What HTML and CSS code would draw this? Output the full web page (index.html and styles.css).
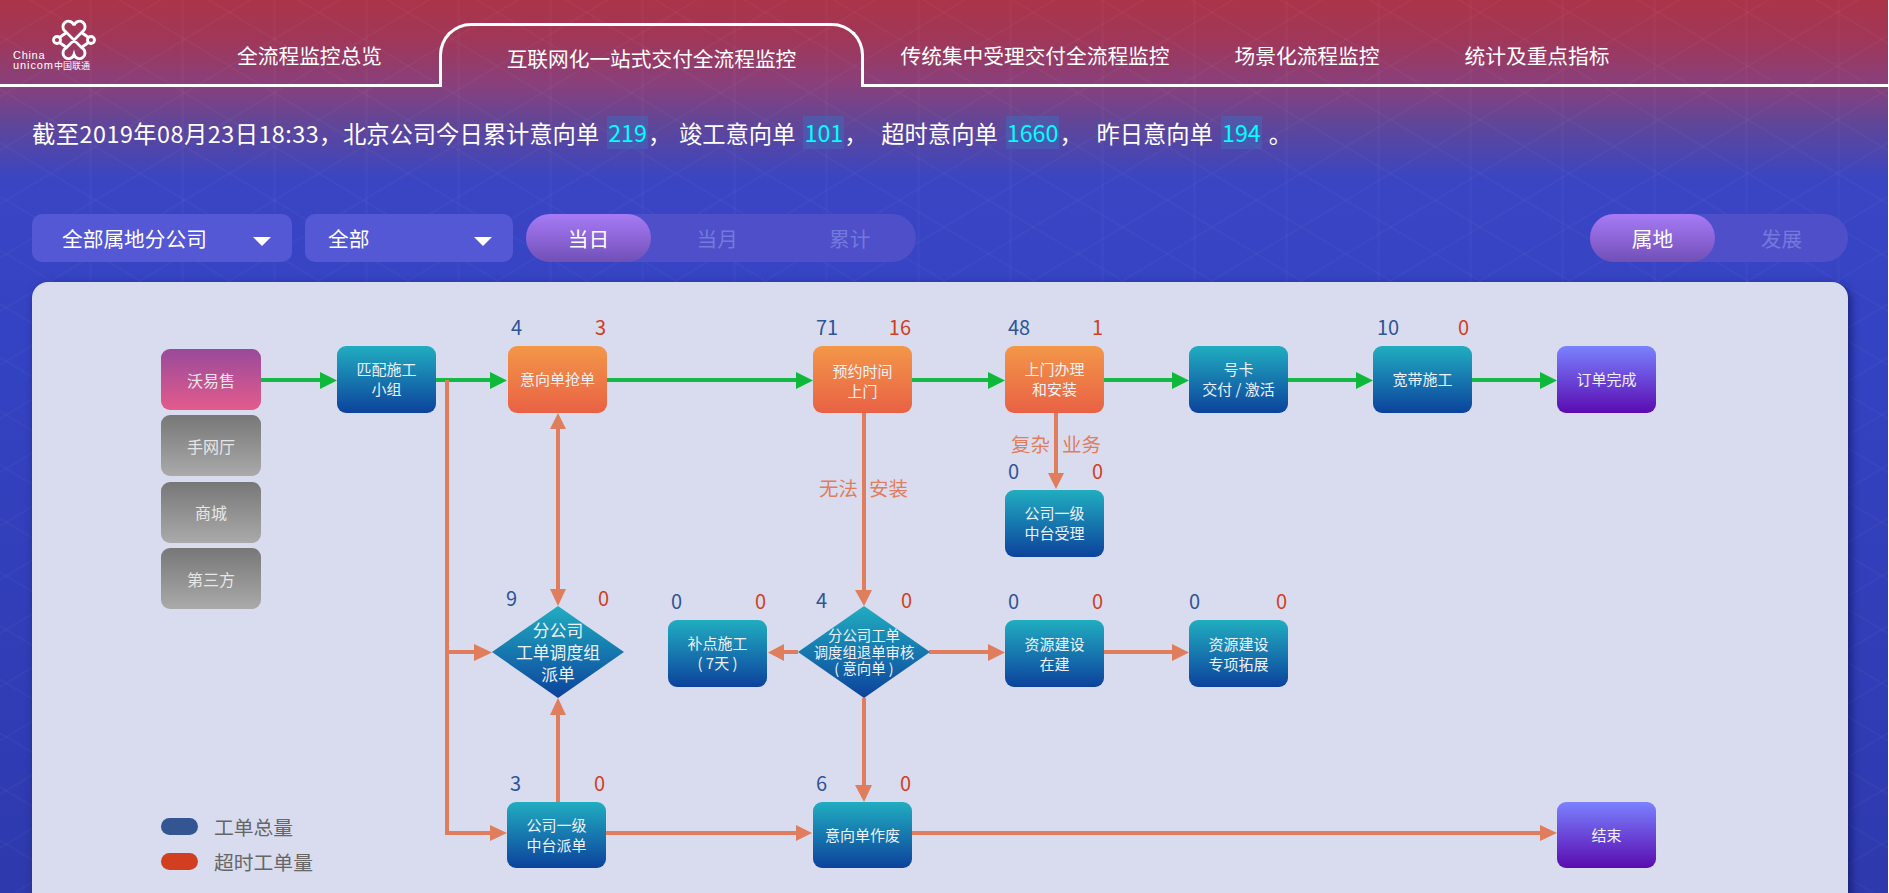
FILE: index.html
```html
<!DOCTYPE html>
<html lang="zh-CN">
<head>
  <meta charset="UTF-8">
  <meta name="viewport" content="width=device-width, initial-scale=1.0">
  <title>全流程监控</title>
  <link rel="stylesheet" href="styles.css">
</head>
<body>
<div class="page">

  <!-- Top navigation -->
  <header class="header">
    <div class="logo">
      <svg class="logo-mark" viewBox="0 0 90 50" width="90" height="50">
        <g fill="none" stroke="#fff" stroke-width="2.8" transform="translate(35 -2)">
          <path d="M34 30 L17.500 13.500 A5.600 5.600 0 1 1 26 7.500 A5.600 5.600 0 1 1 34.500 13.500 L18 30 A5.600 5.600 0 1 0 26 36.500 A5.600 5.600 0 1 0 34 30"/>
          <circle cx="9" cy="22" r="3.500"/>
          <circle cx="43" cy="22" r="3.500"/>
          <path d="M11.500 19.500 L18.500 14.500 M11.500 24.500 L18.500 29.500 M40.500 19.500 L33.500 14.500 M40.500 24.500 L33.500 29.500"/>
        </g>
        <text class="logo-china" x="0" y="39">China</text>
        <text class="logo-unicom" x="0" y="49">unicom<tspan class="logo-cn">中国联通</tspan></text>
      </svg>
    </div>
    <div class="tab tab-overview">全流程监控总览</div>
    <div class="tab tab-active">互联网化一站式交付全流程监控</div>
    <div class="tab tab-classic">传统集中受理交付全流程监控</div>
    <div class="tab tab-scene">场景化流程监控</div>
    <div class="tab tab-stats">统计及重点指标</div>
    <div class="tab tab-rest"></div>
  </header>

  <!-- Summary line -->
  <p class="summary">
    <span class="s-time">截至2019年08月23日18:33，</span>
    <span>北京公司今日累计意向单</span>
    <b class="hl">219</b>
    <span class="sep">，</span>
    <span class="s-done">竣工意向单</span>
    <b class="hl">101</b>
    <span class="sep">，</span>
    <span class="s-late">超时意向单</span>
    <b class="hl">1660</b>
    <span class="sep">，</span>
    <span class="s-yest">昨日意向单</span>
    <b class="hl">194</b>
    <span class="sep sep-end">。</span>
  </p>

  <!-- Filters -->
  <div class="filters">
    <div class="select select-org">全部属地分公司<i class="caret"></i></div>
    <div class="select select-all">全部<i class="caret"></i></div>
    <div class="toggle toggle-time">
      <span class="toggle-item on">当日</span>
      <span class="toggle-item">当月</span>
      <span class="toggle-item">累计</span>
    </div>
    <div class="toggle toggle-dim">
      <span class="toggle-item on">属地</span>
      <span class="toggle-item">发展</span>
    </div>
  </div>

  <!-- Flow diagram -->
  <main class="panel">
    <svg class="wires" viewBox="32 282 1816 620" width="1816" height="620">
      <g class="wire-green">
        <path d="M261 380H322M436 380H492M607 380H798M912 380H990M1104 380H1174M1288 380H1358M1472 380H1542"/>
      </g>
      <g class="tip-green">
        <polygon points="320,372 337,380.500 320,389"/>
        <polygon points="490,372 507,380.500 490,389"/>
        <polygon points="796,372 813,380.500 796,389"/>
        <polygon points="988,372 1005,380.500 988,389"/>
        <polygon points="1172,372 1189,380.500 1172,389"/>
        <polygon points="1356,372 1373,380.500 1356,389"/>
        <polygon points="1540,372 1557,380.500 1540,389"/>
      </g>
      <g class="wire-orange">
        <path d="M447 380V833H492M447 652H476M558 429V591M558 802V713M864 413V592M1056 413V475M798 652H782M929 652H990M1104 652H1174M864 698V787M606 833H798M912 833H1542"/>
      </g>
      <g class="tip-orange">
        <polygon points="490,825 507,833 490,841"/>
        <polygon points="474,644 492,652.500 474,661"/>
        <polygon points="550,429 558,413 566,429"/>
        <polygon points="550,589 558,606 566,589"/>
        <polygon points="550,715 558,698 566,715"/>
        <polygon points="855,590 864,606 872,590"/>
        <polygon points="1048,473 1056,489 1064,473"/>
        <polygon points="784,644 768,652.500 784,661"/>
        <polygon points="988,644 1005,652.500 988,661"/>
        <polygon points="1172,644 1189,652.500 1172,661"/>
        <polygon points="855,785 864,802 872,785"/>
        <polygon points="796,825 812,833 796,841"/>
        <polygon points="1540,825 1557,833 1540,841"/>
      </g>
    </svg>

    <div class="channels">
      <div class="channel pink">沃易售</div>
      <div class="channel gray">手网厅</div>
      <div class="channel gray">商城</div>
      <div class="channel gray">第三方</div>
    </div>

    <div class="node blue at-match">匹配施工<br>小组</div>

    <div class="node orange at-grab">
      <div class="counts"><span>4</span><em>3</em></div>意向单抢单
    </div>
    <div class="node orange at-book">
      <div class="counts"><span>71</span><em>16</em></div>预约时间<br>上门
    </div>
    <div class="node orange at-visit">
      <div class="counts"><span>48</span><em>1</em></div>上门办理<br>和安装
    </div>
    <div class="node blue at-card">号卡<br>交付 / 激活</div>
    <div class="node blue at-band">
      <div class="counts counts-band"><span>10</span><em>0</em></div>宽带施工
    </div>
    <div class="node purple at-finish">订单完成</div>

    <div class="node blue at-mid">
      <div class="counts"><span>0</span><em>0</em></div>公司一级<br>中台受理
    </div>

    <div class="diamond at-dispatch">
      <div class="diamond-shape">分公司<br>工单调度组<br>派单</div>
      <div class="counts counts-dispatch"><span>9</span><em>0</em></div>
    </div>
    <div class="diamond at-review">
      <div class="diamond-shape diamond-small">分公司工单<br>调度组退单审核<br>( 意向单 )</div>
      <div class="counts counts-review"><span>4</span><em>0</em></div>
    </div>

    <div class="node blue at-patch">
      <div class="counts"><span>0</span><em>0</em></div>补点施工<br>( 7天 )
    </div>
    <div class="node blue at-build">
      <div class="counts"><span>0</span><em>0</em></div>资源建设<br>在建
    </div>
    <div class="node blue at-expand">
      <div class="counts counts-flush"><span>0</span><em>0</em></div>资源建设<br>专项拓展
    </div>

    <div class="node blue at-center">
      <div class="counts"><span>3</span><em>0</em></div>公司一级<br>中台派单
    </div>
    <div class="node blue at-void">
      <div class="counts"><span>6</span><em>0</em></div>意向单作废
    </div>
    <div class="node purple at-end">结束</div>

    <div class="wire-label at-complex"><span>复杂</span><span>业务</span></div>
    <div class="wire-label at-noinstall"><span>无法</span><span>安装</span></div>

    <div class="legend">
      <div class="legend-row"><i class="pill pill-total"></i>工单总量</div>
      <div class="legend-row"><i class="pill pill-late"></i>超时工单量</div>
    </div>
  </main>
</div>
</body>
</html>
```

FILE: styles.css
```css
* {
  box-sizing: border-box;
}
html, body {
  margin: 0;
  height: 100%;
  overflow: hidden;
  background-color: #fff;
}
body {
  font-family: "Noto Sans CJK SC", "Noto Sans", sans-serif;
  color: #fff;
}
.page {
  height: 893px;
  margin-right: 1px;
  overflow: hidden;
  background-image:
    repeating-linear-gradient(31deg, transparent 0 44px, rgba(255,255,255,.022) 44px 46px),
    repeating-linear-gradient(-31deg, transparent 0 44px, rgba(255,255,255,.022) 44px 46px),
    repeating-linear-gradient(90deg, transparent 0 89px, rgba(255,255,255,.018) 89px 92px),
    linear-gradient(180deg, #ab3449 0, #a03759 40px, #88407c 85px, #5f4699 125px, #3a45c3 180px, #3443c3 340px, #2e39ad 893px);
}

/* header */
.header {
  display: flex;
  height: 87px;
}
.logo {
  width: 180px;
  padding: 20px 0 0 13px;
  border-bottom: 3px solid #fff;
}
.logo-mark {
  display: block;
  overflow: visible;
}
.logo-china {
  font-family: "Liberation Sans", sans-serif;
  font-size: 11px;
  letter-spacing: .7px;
  fill: #fff;
}
.logo-unicom {
  font-family: "Liberation Sans", sans-serif;
  font-size: 11px;
  letter-spacing: .9px;
  fill: #fff;
}
.logo-cn {
  font-family: "Noto Sans CJK SC", sans-serif;
  font-size: 9px;
  letter-spacing: 0;
}
.tab {
  padding-top: 41px;
  border-bottom: 3px solid #fff;
  font-size: 20.7px;
  line-height: 28px;
  text-align: center;
  white-space: nowrap;
}
.tab-overview { width: 259px; }
.tab-active {
  width: 425px;
  margin-top: 23px;
  padding-top: 18px;
  border: 3px solid #fff;
  border-bottom: 0;
  border-radius: 32px 32px 0 0;
}
.tab-classic { width: 342px; }
.tab-scene { width: 202px; }
.tab-stats { width: 258px; }
.tab-rest { flex: 1; }

/* summary */
.summary {
  display: flex;
  align-items: center;
  height: 33px;
  margin: 29px 0 0;
  padding-left: 32px;
  font-size: 23.3px;
  white-space: nowrap;
}
.s-time {
  letter-spacing: .5px;
}
.hl {
  margin-left: 8px;
  padding: 0 1px;
  height: 33px;
  line-height: 33px;
  font-weight: normal;
  color: #0ff;
  background-color: rgba(60,110,190,.45);
}
.sep {
  width: 23px;
}
.sep-end {
  margin-left: 7px;
}
.s-done { margin-left: 8px; }
.s-late { margin-left: 14px; }
.s-yest { margin-left: 14px; }

/* filters */
.filters {
  display: flex;
  gap: 13px;
  height: 48px;
  margin-top: 65px;
  padding: 0 40px 0 32px;
  font-size: 20.7px;
}
.select {
  display: flex;
  align-items: center;
  justify-content: space-between;
  padding-right: 21px;
  border-radius: 10px;
  background-color: #5558d4;
}
.select-org {
  width: 260px;
  padding-left: 30px;
}
.select-all {
  width: 208px;
  padding-left: 23px;
}
.caret {
  width: 0;
  height: 0;
  margin-top: 6px;
  border-left: 9px solid transparent;
  border-right: 9px solid transparent;
  border-top: 9px solid #fff;
}
.toggle {
  display: flex;
  border-radius: 24px;
  background-color: #4f4fc9;
}
.toggle-time { width: 390px; }
.toggle-dim {
  width: 258px;
  margin-left: auto;
}
.toggle-item {
  flex: 1;
  line-height: 48px;
  text-align: center;
  color: #7379dd;
}
.toggle-item.on {
  flex: 0 0 125px;
  border-radius: 24px;
  color: #fff;
  background: linear-gradient(180deg, #a67bf4 0, #9369de 40%, #6f50b6 100%);
}

/* flow panel */
.panel {
  position: relative;
  width: 1816px;
  height: 640px;
  margin: 20px 0 0 32px;
  border-radius: 16px;
  background-color: #d9dcef;
  box-shadow: 3px 3px 9px rgba(10,15,80,.65);
}
.wires {
  position: absolute;
  left: 0;
  top: 0;
}
.wire-green path {
  fill: none;
  stroke: #14b845;
  stroke-width: 4;
}
.tip-green polygon {
  fill: #0db83b;
}
.wire-orange path {
  fill: none;
  stroke: #e07d5c;
  stroke-width: 4;
}
.tip-orange polygon {
  fill: #e07d5c;
}

.channels {
  position: absolute;
  left: 129px;
  top: 67px;
  display: flex;
  flex-direction: column;
  gap: 5.4px;
}
.channel {
  display: flex;
  align-items: center;
  justify-content: center;
  width: 100px;
  height: 61px;
  border-radius: 9px;
  font-size: 16px;
  color: #e6e6e6;
}
.pink { background: linear-gradient(180deg, #984a9b 0, #e45b8c 100%); }
.gray { background: linear-gradient(180deg, #777 0, #aaa 100%); }

.node {
  position: absolute;
  width: 99px;
  height: 67px;
  padding-top: 13px;
  border-radius: 9px;
  font-size: 15px;
  line-height: 20px;
  text-align: center;
  color: #eef2f8;
}
.blue { background: linear-gradient(180deg, #21adc0 0, #0c429c 100%); }
.orange { background: linear-gradient(180deg, #f39748 0, #e96145 100%); }
.purple { background: linear-gradient(180deg, #7a82ff 0, #5a0bb0 100%); }

.at-match { left: 305px; top: 64px; }
.at-grab { left: 476px; top: 64px; padding-top: 23px; }
.at-book { left: 781px; top: 64px; padding-top: 15px; }
.at-visit { left: 973px; top: 64px; }
.at-card { left: 1157px; top: 64px; }
.at-band { left: 1341px; top: 64px; padding-top: 23px; }
.at-finish { left: 1525px; top: 64px; padding-top: 23px; }
.at-mid { left: 973px; top: 208px; }
.at-patch { left: 636px; top: 338px; }
.at-build { left: 973px; top: 338px; padding-top: 14px; }
.at-expand { left: 1157px; top: 338px; padding-top: 14px; }
.at-center { left: 475px; top: 520px; height: 66px; }
.at-void { left: 781px; top: 520px; height: 66px; padding-top: 23px; }
.at-end { left: 1525px; top: 520px; height: 66px; padding-top: 23px; }

.counts {
  position: absolute;
  left: 3px;
  right: 1px;
  bottom: calc(100% + 5px);
  display: flex;
  justify-content: space-between;
  font-size: 20px;
  line-height: 28px;
  color: #2f5597;
}
.counts em {
  font-style: normal;
  color: #d23f20;
}
.counts-band { left: 4px; right: 3px; }
.counts-flush { left: 0; }
.counts-dispatch { left: 14px; right: 15px; bottom: calc(100% - 6px); }
.counts-review { left: 18px; right: 18px; bottom: calc(100% - 8px); }

.diamond {
  position: absolute;
  width: 132px;
  height: 92px;
}
.at-dispatch { left: 460px; top: 324px; }
.at-review { left: 766px; top: 324px; }
.diamond-shape {
  display: flex;
  align-items: center;
  justify-content: center;
  height: 100%;
  clip-path: polygon(50% 0, 100% 50%, 50% 100%, 0 50%);
  background: linear-gradient(180deg, #21adc0 0, #0c429c 100%);
  font-size: 16.8px;
  line-height: 22px;
  text-align: center;
  color: #eef2f8;
}
.diamond-small {
  font-size: 14.4px;
  line-height: 16.7px;
}

.wire-label {
  position: absolute;
  display: flex;
  font-size: 19.5px;
  line-height: 24px;
  color: #e07d5c;
}
.at-complex { left: 979px; top: 150px; gap: 12px; }
.at-noinstall { left: 787px; top: 194px; gap: 11px; }

.legend {
  position: absolute;
  left: 129px;
  top: 530px;
  display: flex;
  flex-direction: column;
  gap: 6px;
  font-size: 19.8px;
  line-height: 29px;
  color: #666;
}
.legend-row {
  display: flex;
  align-items: center;
  gap: 16px;
}
.pill {
  width: 37px;
  height: 17px;
  border-radius: 9px;
}
.pill-total { background-color: #335592; }
.pill-late { background-color: #d23f20; }
```
